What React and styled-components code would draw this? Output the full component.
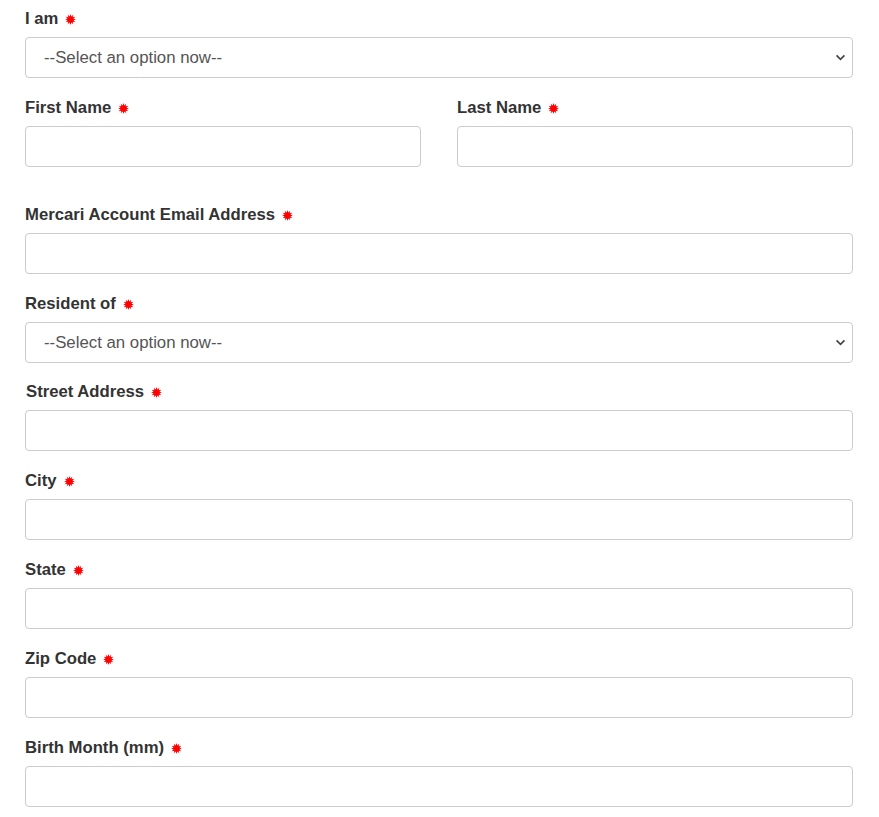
import React from 'react'
import styled, { createGlobalStyle } from 'styled-components'

const GlobalStyle = createGlobalStyle`
  body {
    margin: 8px;
    background: #ffffff;
    font-family: "Liberation Sans", Arial, sans-serif;
  }
`

const fields = [
  { label: 'Mercari Account Email Address', extra: true },
  { label: 'Resident of', select: true },
  { label: 'Street Address', nudge: true },
  { label: 'City' },
  { label: 'State' },
  { label: 'Zip Code' },
  { label: 'Birth Month (mm)' },
]

function Star() {
  const pts = []
  const n = 12
  for (let i = 0; i < n * 2; i++) {
    const r = i % 2 === 0 ? 5.5 : 3.1
    const a = (Math.PI * i) / n
    pts.push(`${(5.5 + r * Math.sin(a)).toFixed(2)},${(5.5 - r * Math.cos(a)).toFixed(2)}`)
  }
  return (
    <StarIcon viewBox="0 0 11 11" width="11" height="11">
      <polygon points={pts.join(' ')} fill="#ff0000" />
    </StarIcon>
  )
}

function SelectBox() {
  return (
    <SelectWrap>
      <Select defaultValue="">
        <option value="">--Select an option now--</option>
      </Select>
      <Chevron viewBox="0 0 12 8" width="11" height="7">
        <path d="M1.5 1.5 L6 6 L10.5 1.5" fill="none" stroke="#444" strokeWidth="1.9" />
      </Chevron>
    </SelectWrap>
  )
}

function Field({ label, select, nudge, extra }) {
  return (
    <FieldBox $extra={extra} $nudge={nudge}>
      <Label $nudge={nudge}>
        {label}
        <Star />
      </Label>
      {select ? <SelectBox /> : <Input type="text" />}
    </FieldBox>
  )
}

export default function App() {
  return (
    <>
      <GlobalStyle />
      <Form>
        <Field label="I am" select />
        <Row>
          <Field label="First Name" />
          <Field label="Last Name" />
        </Row>
        {fields.map((f) => (
          <Field key={f.label} {...f} />
        ))}
      </Form>
    </>
  )
}

const Form = styled.form`
  display: flex;
  flex-direction: column;
  width: 828px;
  padding: 0 17px;
`

const Row = styled.div`
  display: grid;
  grid-template-columns: 1fr 1fr;
  gap: 36px;
`

const FieldBox = styled.div`
  display: flex;
  flex-direction: column;
  margin-bottom: 19px;
  margin-top: ${(p) => (p.$extra ? '18px' : p.$nudge ? '-1px' : '0')};
`

const Label = styled.label`
  display: flex;
  align-items: center;
  height: 20px;
  line-height: 20px;
  font-size: 16.7px;
  font-weight: 700;
  color: #333333;
  margin: 1px 0 8px;
  padding-left: ${(p) => (p.$nudge ? '1px' : '0')};
`

const StarIcon = styled.svg`
  margin-left: 7px;
  margin-top: 1px;
`

const Input = styled.input`
  box-sizing: border-box;
  width: 100%;
  height: 41px;
  border: 1px solid #cccccc;
  border-radius: 4px;
  background: #ffffff;
  padding: 0 18px;
  font-size: 16px;
  font-family: "Liberation Sans", Arial, sans-serif;
  outline: none;
`

const SelectWrap = styled.div`
  position: relative;
`

const Select = styled.select`
  box-sizing: border-box;
  width: 100%;
  height: 41px;
  border: 1px solid #cccccc;
  border-radius: 4px;
  background: #ffffff;
  padding: 0 18px;
  font-size: 16.8px;
  color: #555555;
  font-family: "Liberation Sans", Arial, sans-serif;
  appearance: none;
  -webkit-appearance: none;
  outline: none;
`

const Chevron = styled.svg`
  position: absolute;
  right: 7px;
  top: 17px;
  pointer-events: none;
`
